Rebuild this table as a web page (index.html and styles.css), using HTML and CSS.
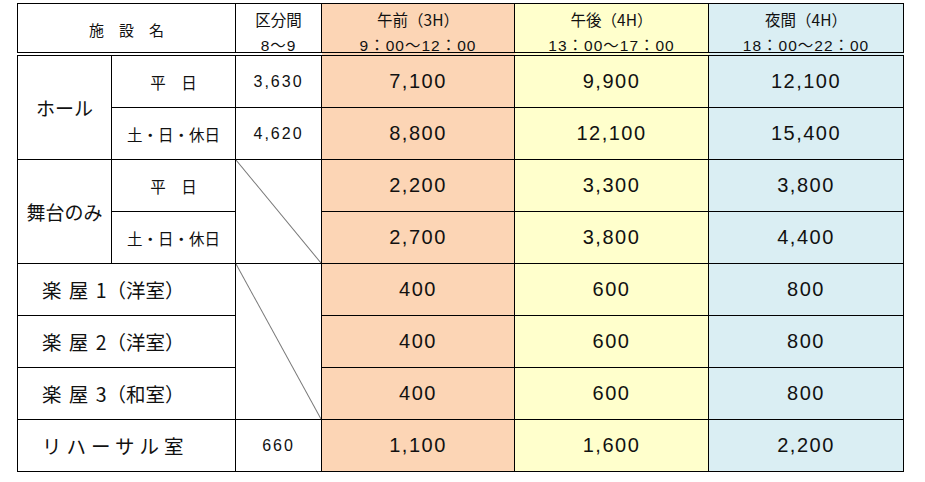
FILE: index.html
```html
<!DOCTYPE html>
<html lang="ja">
<head>
<meta charset="utf-8">
<link rel="stylesheet" href="styles.css">
</head>
<body>
<div class="wrap">
<table class="fee">
  <colgroup>
    <col class="c1"><col class="c2"><col class="c3"><col class="c4"><col class="c5"><col class="c6">
  </colgroup>
  <thead>
    <tr>
      <th colspan="2" class="name">施　設　名</th>
      <th class="sm"><div class="l1">区分間</div><div class="l2">8〜9</div></th>
      <th class="am sm"><div class="l1">午前（3H）</div><div class="l2">9：00〜12：00</div></th>
      <th class="pm sm"><div class="l1">午後（4H）</div><div class="l2">13：00〜17：00</div></th>
      <th class="ev sm"><div class="l1">夜間（4H）</div><div class="l2">18：00〜22：00</div></th>
    </tr>
  </thead>
  <tbody>
    <tr>
      <td rowspan="2" class="big">ホール</td>
      <td class="day">平　日</td>
      <td class="small">3,630</td>
      <td class="am num">7,100</td>
      <td class="pm num">9,900</td>
      <td class="ev num">12,100</td>
    </tr>
    <tr>
      <td class="day">土・日・休日</td>
      <td class="small">4,620</td>
      <td class="am num">8,800</td>
      <td class="pm num">12,100</td>
      <td class="ev num">15,400</td>
    </tr>
    <tr>
      <td rowspan="2" class="big">舞台のみ</td>
      <td class="day">平　日</td>
      <td rowspan="2" class="slash"></td>
      <td class="am num">2,200</td>
      <td class="pm num">3,300</td>
      <td class="ev num">3,800</td>
    </tr>
    <tr>
      <td class="day">土・日・休日</td>
      <td class="am num">2,700</td>
      <td class="pm num">3,800</td>
      <td class="ev num">4,400</td>
    </tr>
    <tr>
      <td colspan="2" class="room">楽 屋 1（洋室）</td>
      <td rowspan="3" class="slash"></td>
      <td class="am num">400</td>
      <td class="pm num">600</td>
      <td class="ev num">800</td>
    </tr>
    <tr>
      <td colspan="2" class="room">楽 屋 2（洋室）</td>
      <td class="am num">400</td>
      <td class="pm num">600</td>
      <td class="ev num">800</td>
    </tr>
    <tr>
      <td colspan="2" class="room">楽 屋 3（和室）</td>
      <td class="am num">400</td>
      <td class="pm num">600</td>
      <td class="ev num">800</td>
    </tr>
    <tr>
      <td colspan="2" class="room reh">リハーサル室</td>
      <td class="small">660</td>
      <td class="am num">1,100</td>
      <td class="pm num">1,600</td>
      <td class="ev num">2,200</td>
    </tr>
  </tbody>
</table>
</div>
</body>
</html>
```

FILE: styles.css
```css
html, body {
  margin: 0;
  padding: 0;
  background: #ffffff;
}
body {
  font-family: "Noto Sans CJK JP", "Liberation Sans", sans-serif;
  color: #111111;
}
.wrap {
  padding: 3px 0 0 17px;
}
.fee {
  border-collapse: collapse;
  table-layout: fixed;
  width: 886px;
}
.c1 { width: 94px; }
.c2 { width: 124px; }
.c3 { width: 86px; }
.c4 { width: 193px; }
.c5 { width: 194px; }
.c6 { width: 195px; }
.fee th, .fee td {
  border: 1.5px solid #000;
  padding: 0;
  text-align: center;
  vertical-align: middle;
  font-weight: normal;
}
.fee thead th {
  height: 46px;
  padding-top: 2px;
  border-bottom: 4px double #000;
}
.fee tbody td {
  height: 51px;
}
.name {
  font-size: 15px;
}
.sm {
  font-size: 15.5px;
  line-height: 25px;
}
.sm .l1 {
  margin-top: 1px;
}
.sm .l2 {
  font-family: "Liberation Sans", "Noto Sans CJK JP", sans-serif;
  letter-spacing: 1px;
  margin-top: 1px;
  margin-bottom: -6px;
}
.am { background: #fcd5b5; }
.pm { background: #ffffcc; }
.ev { background: #daeef3; }
.num {
  font-family: "Liberation Sans", sans-serif;
  font-size: 20px;
  letter-spacing: 1.5px;
}
.small {
  font-family: "Liberation Sans", sans-serif;
  font-size: 16px;
  letter-spacing: 2px;
}
.big {
  font-size: 19px;
}
.day {
  font-size: 15.5px;
}
.room {
  text-align: left !important;
  padding-left: 24px !important;
  font-size: 19.5px;
  word-spacing: 3px;
}
.reh {
  letter-spacing: 5px;
}
.slash {
  background-image: url("data:image/svg+xml,%3Csvg xmlns='http://www.w3.org/2000/svg' viewBox='0 0 100 100' preserveAspectRatio='none'%3E%3Cline x1='0' y1='0' x2='100' y2='100' stroke='%23777' stroke-width='1' vector-effect='non-scaling-stroke'/%3E%3C/svg%3E");
  background-repeat: no-repeat;
  background-size: 100% 100%;
}
```
